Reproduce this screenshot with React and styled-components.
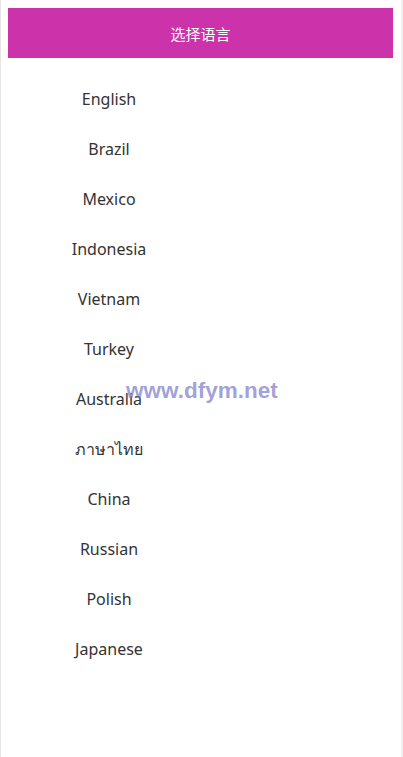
import styled, { createGlobalStyle } from "styled-components";

const languages = [
  "English",
  "Brazil",
  "Mexico",
  "Indonesia",
  "Vietnam",
  "Turkey",
  "Australia",
  "ภาษาไทย",
  "China",
  "Russian",
  "Polish",
  "Japanese",
];

const GlobalStyle = createGlobalStyle`
  html, body {
    margin: 0;
    padding: 0;
    background: #fff;
  }
  body {
    font-family: "Noto Sans", "Open Sans", "Noto Sans CJK SC", sans-serif;
  }
`;

const Page = styled.div`
  position: relative;
  box-sizing: border-box;
  min-height: 100vh;
  padding: 8px 8px 0 7px;
  border-left: 1px solid #e6e6e6;
  border-right: 2px solid #f0f0f0;
`;

const Header = styled.div`
  width: 385px;
  height: 50px;
  display: flex;
  align-items: center;
  justify-content: center;
  background: #cc33aa;
  color: #fff;
  font-size: 15px;
  font-family: "Noto Sans CJK SC", sans-serif;
`;

const List = styled.ul`
  list-style: none;
  margin: 0;
  padding: 16px 0 0 0;
  width: 202px;
`;

const Item = styled.li`
  height: 50px;
  display: flex;
  align-items: center;
  justify-content: center;
  font-size: 16px;
  color: #333;
`;

const Watermark = styled.div`
  position: absolute;
  left: 125px;
  top: 378px;
  font-family: "Liberation Sans", Arial, sans-serif;
  font-weight: bold;
  font-size: 22.5px;
  color: rgba(120, 120, 200, 0.7);
  pointer-events: none;
`;

const App = () => {
  return (
    <>
      <GlobalStyle />
      <Page>
        <Header>选择语言</Header>
        <List>
          {languages.map((lang) => (
            <Item key={lang}>{lang}</Item>
          ))}
        </List>
        <Watermark>www.dfym.net</Watermark>
      </Page>
    </>
  );
};

export default App;
